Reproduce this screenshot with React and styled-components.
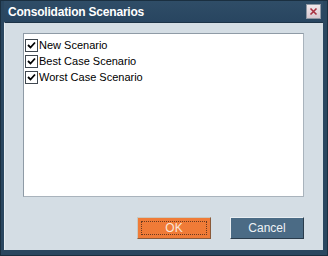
import React from "react";
import styled, { createGlobalStyle } from "styled-components";

const Global = createGlobalStyle`
  html, body { margin: 0; padding: 0; background: #ffffff; }
  #root { width: 328px; height: 256px; }
`;

const Window = styled.div`
  box-sizing: border-box;
  width: 328px;
  height: 256px;
  display: flex;
  flex-direction: column;
  background: #2a4760;
  border: 1px solid #1a2f40;
  padding: 0 4px 5px 3px;
  font-family: "Liberation Sans", Tahoma, sans-serif;
`;

const TitleBar = styled.div`
  height: 21px;
  display: flex;
  align-items: center;
  justify-content: space-between;
  padding: 0 2px 0 4px;
  background: linear-gradient(#2f4d67, #284560);
`;

const Title = styled.div`
  color: #ffffff;
  font-family: "Liberation Sans", Tahoma, sans-serif;
  font-weight: bold;
  font-size: 12px;
  letter-spacing: -0.2px;
`;

const CloseButton = styled.div`
  width: 13px;
  height: 13px;
  background: linear-gradient(#f2e8ec, #d8c8d0);
  border: 1px solid #8e98a4;
  display: flex;
  align-items: center;
  justify-content: center;
`;

const Content = styled.div`
  flex: 1;
  display: flex;
  flex-direction: column;
  background: #d4dde4;
  border-top: 1px solid #1d3347;
  border-left: 1px solid #e8eef2;
  padding: 10px 19px 11px 18px;
`;

const ListBox = styled.div`
  height: 164px;
  box-sizing: border-box;
  background: #ffffff;
  border: 1px solid #8f9ba6;
  border-right-color: #a9b3bc;
  border-bottom-color: #a9b3bc;
  padding: 3px 1px;
  display: flex;
  flex-direction: column;
`;

const Row = styled.label`
  display: flex;
  align-items: center;
  height: 16px;
  font-family: "Liberation Sans", Tahoma, sans-serif;
  font-size: 11px;
  color: #000000;
`;

const Box = styled.span`
  width: 11px;
  height: 11px;
  border: 1px solid #404850;
  background: #ffffff;
  display: flex;
  align-items: center;
  justify-content: center;
  margin-right: 1px;
  flex-shrink: 0;
`;

const Buttons = styled.div`
  margin-top: auto;
  display: flex;
  justify-content: flex-end;
  gap: 19px;
`;

const Button = styled.button`
  width: 74px;
  height: 22px;
  box-sizing: border-box;
  padding: 0;
  font-family: "Liberation Sans", Tahoma, sans-serif;
  font-size: 12px;
  color: ${(p) => (p.$primary ? "#fbe6d8" : "#eef2f5")};
  background: ${(p) => (p.$primary ? "#f07b37" : "#4b6b85")};
  border: 1px solid ${(p) => (p.$primary ? "#c9c9c0" : "#e9eef2")};
  border-right-color: ${(p) => (p.$primary ? "#8a5a3a" : "#2a3c4c")};
  border-bottom-color: ${(p) => (p.$primary ? "#8a5a3a" : "#2a3c4c")};
  position: relative;
  display: flex;
  align-items: center;
  justify-content: center;
`;

const Focus = styled.span`
  position: absolute;
  inset: 3px 3px 3px 3px;
  border: 1px dotted #6a3a20;
`;

const Check = () => (
  <svg width="9" height="9" viewBox="0 0 9 9">
    <path d="M1 4 L3.5 6.5 L8 1.5" stroke="#000" strokeWidth="1.8" fill="none" />
  </svg>
);

const items = ["New Scenario", "Best Case Scenario", "Worst Case Scenario"];

export default function App() {
  return (
    <>
      <Global />
      <Window>
        <TitleBar>
          <Title>Consolidation Scenarios</Title>
          <CloseButton>
            <svg width="9" height="9" viewBox="0 0 9 9">
              <path d="M1.5 1.5 L7.5 7.5 M7.5 1.5 L1.5 7.5" stroke="#a83040" strokeWidth="1.6" />
            </svg>
          </CloseButton>
        </TitleBar>
        <Content>
          <ListBox>
            {items.map((t) => (
              <Row key={t}>
                <Box>
                  <Check />
                </Box>
                {t}
              </Row>
            ))}
          </ListBox>
          <Buttons>
            <Button $primary>
              <Focus />
              OK
            </Button>
            <Button>Cancel</Button>
          </Buttons>
        </Content>
      </Window>
    </>
  );
}
